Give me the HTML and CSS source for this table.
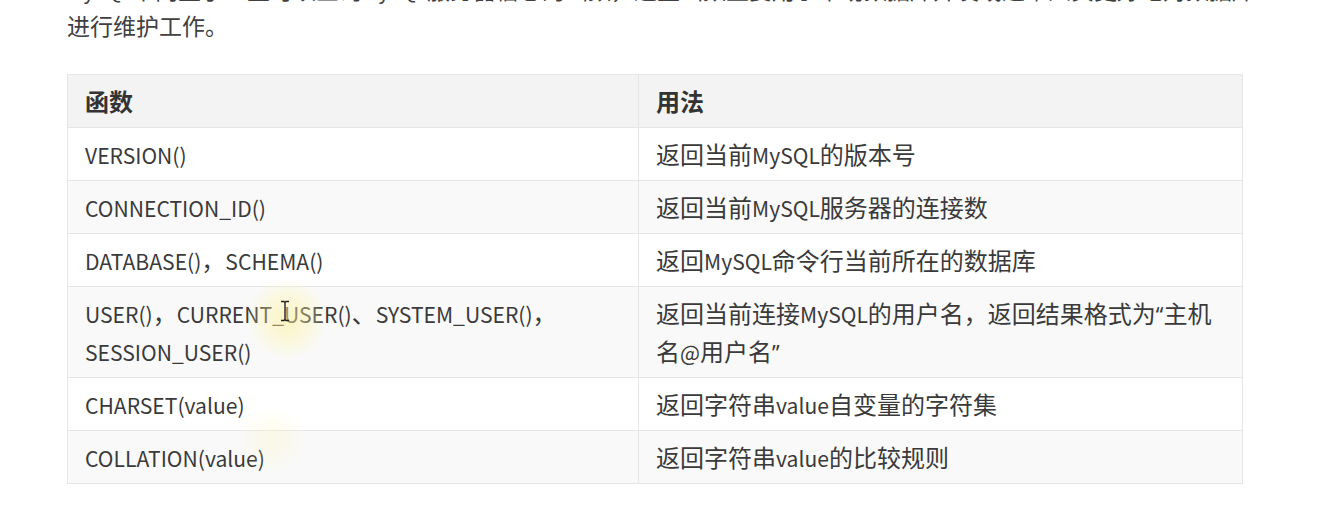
FILE: index.html
```html
<!DOCTYPE html>
<html lang="zh-CN">
<head>
<meta charset="utf-8">
<title>MySQL 系统信息函数</title>
<link rel="stylesheet" href="styles.css">
</head>
<body>
<main class="page">
  <p class="intro"><span class="lat">MySQL</span>中内置了一些可以查询<span class="lat">MySQL</span>服务器信息的函数，这些函数主要用于帮助数据库开发或运维人员更好地对数据库<br>进行维护工作。</p>
  <div class="table-wrap">
    <table class="func-table">
      <colgroup>
        <col class="col-func">
        <col class="col-usage">
      </colgroup>
      <thead>
        <tr><th>函数</th><th>用法</th></tr>
      </thead>
      <tbody>
        <tr><td><span class="lat">VERSION()</span></td><td>返回当前<span class="lat">MySQL</span>的版本号</td></tr>
        <tr><td><span class="lat">CONNECTION_ID()</span></td><td>返回当前<span class="lat">MySQL</span>服务器的连接数</td></tr>
        <tr><td><span class="lat">DATABASE()</span>，<span class="lat">SCHEMA()</span></td><td>返回<span class="lat">MySQL</span>命令行当前所在的数据库</td></tr>
        <tr><td><span class="lat">USER()</span>，<span class="lat">CURRENT_USER()</span>、<span class="lat">SYSTEM_USER()</span>，<br><span class="lat">SESSION_USER()</span></td><td>返回当前连接<span class="lat">MySQL</span>的用户名，返回结果格式为<span class="quote">“</span>主机<br>名<span class="lat">@</span>用户名<span class="quote">”</span></td></tr>
        <tr><td><span class="lat">CHARSET(value)</span></td><td>返回字符串<span class="lat">value</span>自变量的字符集</td></tr>
        <tr><td><span class="lat">COLLATION(value)</span></td><td>返回字符串<span class="lat">value</span>的比较规则</td></tr>
      </tbody>
    </table>
    <div class="cursor-glow"></div>
    <div class="cursor-glow faint"></div>
    <svg class="ibeam" width="10" height="22" viewBox="0 0 10 22" aria-hidden="true">
      <path d="M1 1.5h3l1 1 1-1h3M5 2.5v17M1 20.5h3l1-1 1 1h3" fill="none" stroke="#222" stroke-width="1.4"/>
    </svg>
  </div>
</main>
</body>
</html>
```
FILE: styles.css
```css
html, body {
  margin: 0;
  padding: 0;
  background: #ffffff;
}

body {
  font-family: "Noto Sans CJK SC", "Noto Sans", sans-serif;
  color: #3a3a3a;
  overflow: hidden;
}

.page {
  padding: 0 99px 0 67px;
}

.lat {
  font-size: 0.88em;
  line-height: 1;
}

.quote {
  font-family: "Noto Sans", sans-serif;
  font-size: 0.88em;
  line-height: 1;
}

.intro {
  margin: -29px 0 31px 0;
  font-size: 23px;
  line-height: 36px;
  color: #404040;
  white-space: nowrap;
}

.table-wrap {
  position: relative;
  width: 1176px;
}

.func-table {
  width: 1176px;
  border-collapse: collapse;
  border: 1px solid #e3e3e3;
  font-size: 24px;
  line-height: 38px;
  table-layout: fixed;
}

.col-func {
  width: 571px;
}

.func-table th,
.func-table td {
  border: 1px solid #e6e6e6;
  padding: 7px 17px;
  text-align: left;
  vertical-align: top;
  color: #3a3a3a;
  white-space: nowrap;
}

.func-table th {
  font-weight: 700;
  background: #f3f3f3;
  color: #333333;
}

.func-table tbody tr:nth-child(even) td {
  background: #f9f9f9;
}

.cursor-glow {
  position: absolute;
  left: 180px;
  top: 205px;
  width: 80px;
  height: 80px;
  border-radius: 50%;
  background: radial-gradient(circle, rgba(255, 240, 150, 0.55) 0%, rgba(255, 245, 170, 0.3) 45%, rgba(255, 250, 200, 0) 72%);
  pointer-events: none;
}

.cursor-glow.faint {
  left: 170px;
  top: 330px;
  width: 70px;
  height: 70px;
  background: radial-gradient(circle, rgba(255, 245, 170, 0.25) 0%, rgba(255, 250, 200, 0) 70%);
}

.ibeam {
  position: absolute;
  left: 213px;
  top: 226px;
  pointer-events: none;
}
```
